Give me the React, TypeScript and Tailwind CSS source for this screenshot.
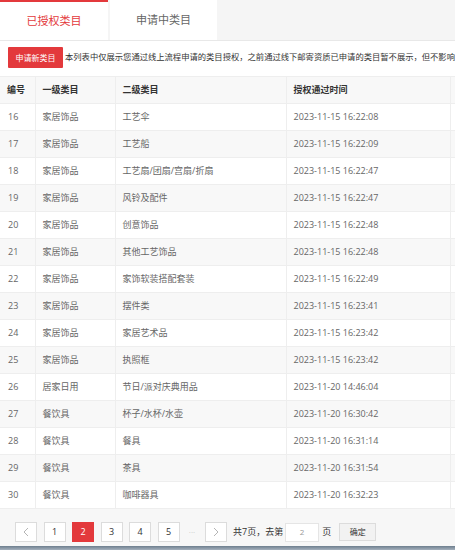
const rows: [number, string, string, string][] = [
  [16, '家居饰品', '工艺伞', '2023-11-15 16:22:08'],
  [17, '家居饰品', '工艺船', '2023-11-15 16:22:09'],
  [18, '家居饰品', '工艺扇/团扇/宫扇/折扇', '2023-11-15 16:22:47'],
  [19, '家居饰品', '风铃及配件', '2023-11-15 16:22:47'],
  [20, '家居饰品', '创意饰品', '2023-11-15 16:22:48'],
  [21, '家居饰品', '其他工艺饰品', '2023-11-15 16:22:48'],
  [22, '家居饰品', '家饰软装搭配套装', '2023-11-15 16:22:49'],
  [23, '家居饰品', '摆件类', '2023-11-15 16:23:41'],
  [24, '家居饰品', '家居艺术品', '2023-11-15 16:23:42'],
  [25, '家居饰品', '执照框', '2023-11-15 16:23:42'],
  [26, '居家日用', '节日/派对庆典用品', '2023-11-20 14:46:04'],
  [27, '餐饮具', '杯子/水杯/水壶', '2023-11-20 16:30:42'],
  [28, '餐饮具', '餐具', '2023-11-20 16:31:14'],
  [29, '餐饮具', '茶具', '2023-11-20 16:31:54'],
  [30, '餐饮具', '咖啡器具', '2023-11-20 16:32:23'],
]

function Chevron({ dir }: { dir: 'l' | 'r' }) {
  return (
    <svg width="6" height="10" viewBox="0 0 6 10" fill="none">
      <path
        d={dir === 'l' ? 'M5 1L1 5l4 4' : 'M1 1l4 4-4 4'}
        stroke="#b5b5b5"
        strokeWidth="1"
      />
    </svg>
  )
}

function PageBtn({ children, active }: { children: React.ReactNode; active?: boolean }) {
  return (
    <div
      className={
        active
          ? 'w-[22px] h-[20px] flex items-center justify-center bg-[#e3393c] border border-[#e3393c] text-white text-[9px]'
          : 'w-[22px] h-[20px] flex items-center justify-center bg-white border border-[#dcdcdc] text-[#333] text-[9px]'
      }
    >
      {children}
    </div>
  )
}

export default function App() {
  return (
    <div
      className="w-[455px] h-[550px] overflow-hidden flex flex-col bg-[#f7f7f7]"
      style={{ fontFamily: '"Open Sans", "Noto Sans CJK SC", sans-serif' }}
    >
      {/* tabs */}
      <div className="h-[41px] shrink-0 flex bg-[#f5f5f5] border-b border-[#e8e8e8]">
        <div className="w-[108px] bg-white border-t-2 border-[#e3393c] flex items-center justify-center text-[11px] text-[#e3393c]">
          已授权类目
        </div>
        <div className="ml-[2px] w-[107px] bg-white flex items-center justify-center text-[11px] text-[#666]">
          申请中类目
        </div>
      </div>

      <div className="bg-white shrink-0">
        <div className="flex items-center pl-[8px] pt-[6px] pb-[8px] whitespace-nowrap">
          <div className="w-[55px] h-[21px] shrink-0 bg-[#e3393c] rounded-[1px] text-white text-[8px] flex items-center justify-center">
            申请新类目
          </div>
          <span className="ml-[2px] text-[8.3px] text-[#333]">
            本列表中仅展示您通过线上流程申请的类目授权，之前通过线下邮寄资质已申请的类目暂不展示，但不影响您的正常经营。
          </span>
        </div>

        <table className="border-collapse table-fixed w-[520px] text-[9px] text-[#666]">
          <colgroup>
            <col className="w-[35px]" />
            <col className="w-[80px]" />
            <col className="w-[171px]" />
            <col className="w-[164px]" />
            <col />
          </colgroup>
          <thead>
            <tr className="h-[27px] bg-[#f8f8f8] text-[#333] font-semibold">
              <th className="text-left pl-[7px] border border-[#eeeeee] border-l-0">编号</th>
              <th className="text-left pl-[7px] border border-[#eeeeee]">一级类目</th>
              <th className="text-left pl-[7px] border border-[#eeeeee]">二级类目</th>
              <th className="text-left pl-[7px] border border-[#eeeeee]">授权通过时间</th>
              <th className="border border-[#eeeeee]"></th>
            </tr>
          </thead>
          <tbody>
            {rows.map(([no, a, b, t], i) => (
              <tr key={no} className={i % 2 === 1 ? 'h-[27px] bg-[#f8f8f8]' : 'h-[27px] bg-white'}>
                <td className="pl-[8px] border border-[#eeeeee] border-l-0">{no}</td>
                <td className="pl-[7px] border border-[#eeeeee]">{a}</td>
                <td className="pl-[7px] border border-[#eeeeee]">{b}</td>
                <td className="pl-[7px] border border-[#eeeeee]">{t}</td>
                <td className="border border-[#eeeeee]"></td>
              </tr>
            ))}
          </tbody>
        </table>
      </div>

      {/* pagination */}
      <div className="flex-1 flex items-start pl-[15px] pt-[13px] gap-[6.5px] text-[9px] text-[#333] whitespace-nowrap">
        <PageBtn>
          <Chevron dir="l" />
        </PageBtn>
        <PageBtn>1</PageBtn>
        <PageBtn active>2</PageBtn>
        <PageBtn>3</PageBtn>
        <PageBtn>4</PageBtn>
        <PageBtn>5</PageBtn>
        <div className="w-[12px] h-[20px] flex items-center justify-center text-[#c8c8c8] text-[8px]">···</div>
        <PageBtn>
          <Chevron dir="r" />
        </PageBtn>
        <div className="h-[20px] flex items-center">
          <span>共7页，去第</span>
          <div className="ml-[2px] w-[34px] h-[19px] bg-white border border-[#e5e5e5] flex items-center justify-center text-[#999] text-[8px]">
            2
          </div>
          <span className="ml-[3px]">页</span>
          <div className="ml-[8px] w-[37px] h-[18px] bg-[#f2f2f2] border border-[#dcdcdc] flex items-center justify-center text-[8px]">
            确定
          </div>
        </div>
      </div>

      <div className="h-[4px] shrink-0 bg-gradient-to-b from-[#6e7e8e] to-[#a5b1bd]" />
    </div>
  )
}
